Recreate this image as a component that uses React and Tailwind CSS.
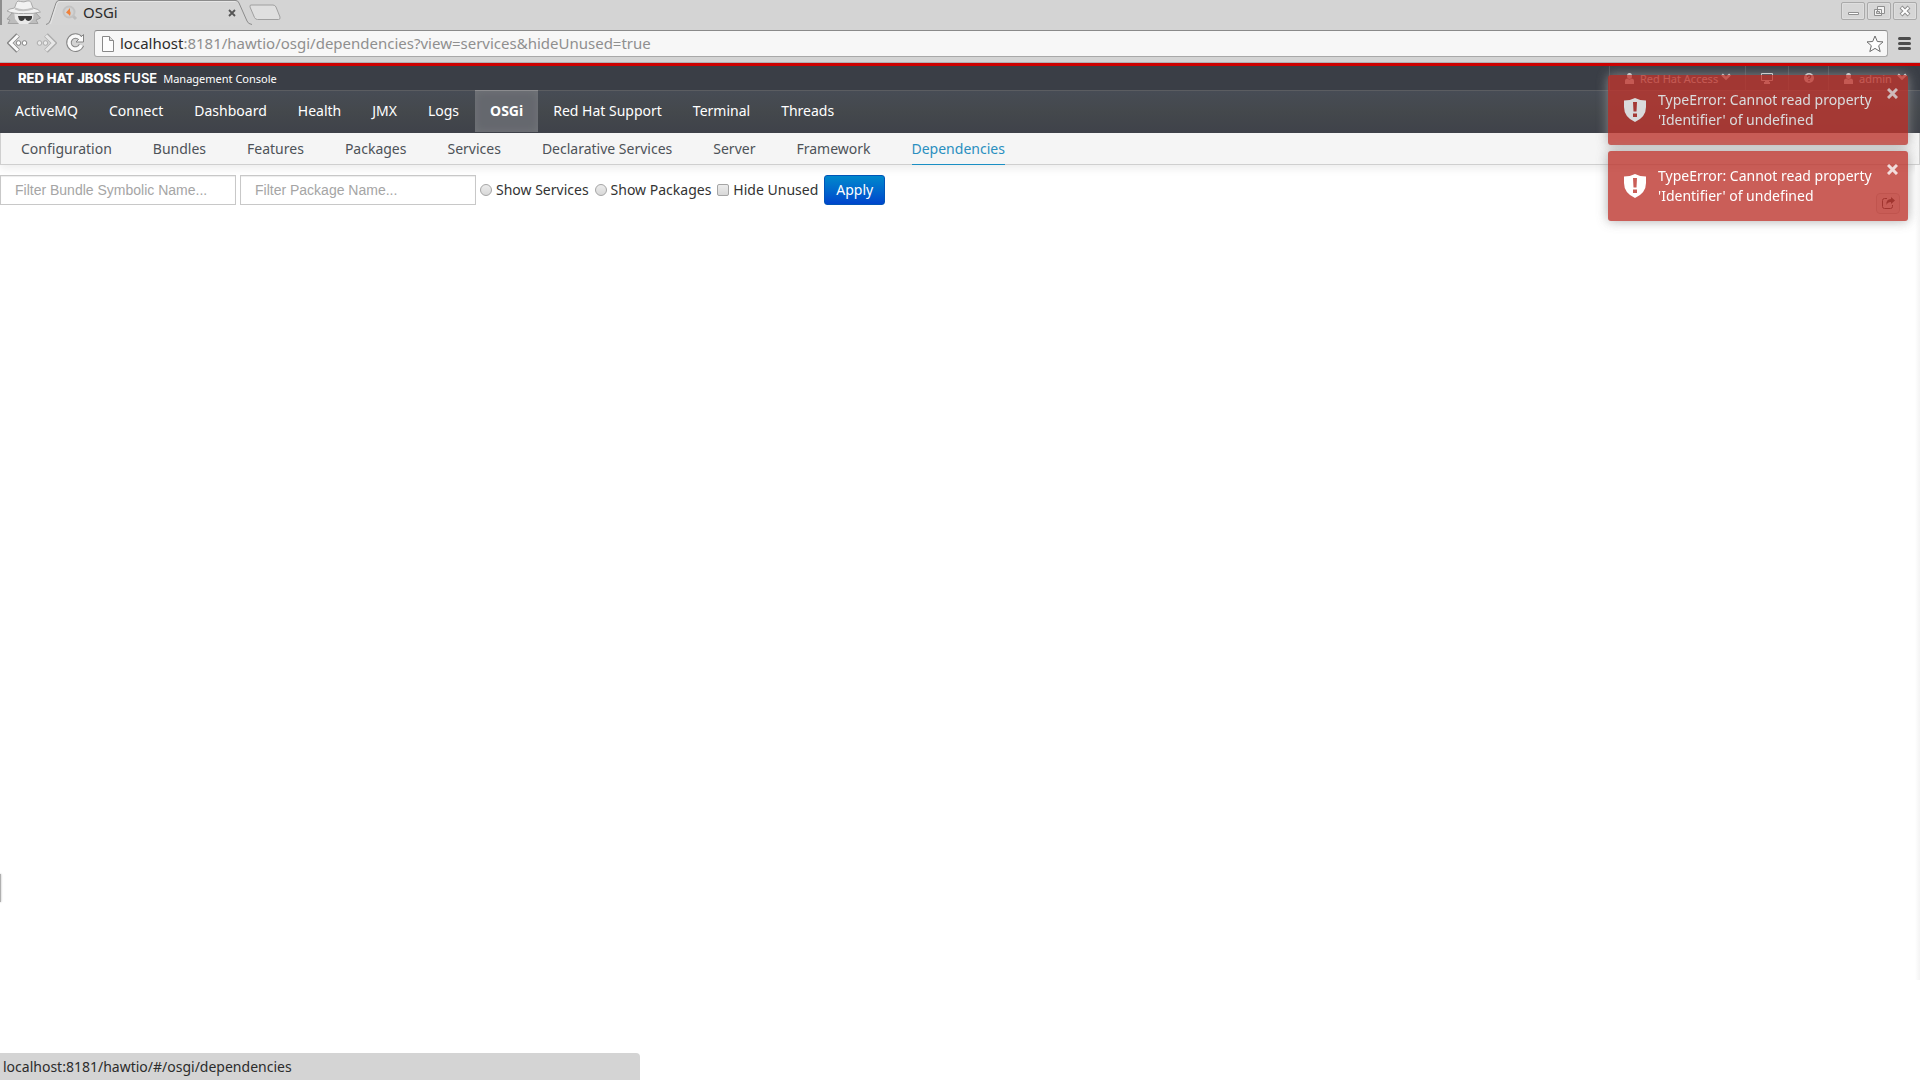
const NAV = ["ActiveMQ", "Connect", "Dashboard", "Health", "JMX", "Logs", "OSGi", "Red Hat Support", "Terminal", "Threads"];
const SUBNAV = ["Configuration", "Bundles", "Features", "Packages", "Services", "Declarative Services", "Server", "Framework", "Dependencies"];

function Incognito() {
  return (
    <svg width="36" height="24" viewBox="0 0 36 24" className="ml-1 block shrink-0">
      <path d="M6 13 L1 19 L4 20 L2 23.500 H32 L30 20 L34.500 18 L30 13 Z" fill="#bdbdbd" stroke="#a2a2a2" />
      <path d="M8 11 L9 19 L13 24 H22 L27 19 L28 11 Z" fill="#e9e9e9" />
      <path d="M1 11 Q3 8.500 8.500 8 L10.500 2.500 Q11.500 0 14.500 1.500 Q18 2.500 21 1 Q24 0 25 2.500 L27 8 Q33 9 34.500 12 Q28 14 17.500 13.500 Q7 14 1 11 Z" fill="#f1f1f1" stroke="#a9a9a9" />
      <path d="M9 8.500 Q17 12 27 8.500" fill="none" stroke="#c2c2c2" strokeWidth="2" />
      <path d="M12 16 H26 V18 Q25 21 22 21 Q20 21 19 18 Q18 21 15.500 21 Q13 21 12.500 18 Z" fill="#3c3c3c" />
    </svg>
  );
}

function BackArrow({ flip, dim }) {
  return (
    <svg width="21" height="20" viewBox="0 0 21 20" className={(flip ? "-scale-x-100 " : "") + (dim ? "opacity-50" : "")}>
      <path d="M11 2 L3 10 L11 18" fill="none" stroke="#858585" strokeWidth="5" />
      <path d="M11 2.500 L3.500 10 L11 17.500" fill="none" stroke="#fafafa" strokeWidth="3" />
      <circle cx="11.500" cy="10" r="2.300" fill="#fff" stroke="#858585" />
      <circle cx="17.500" cy="10" r="2.300" fill="#fff" stroke="#858585" />
    </svg>
  );
}

function Reload() {
  return (
    <svg width="21" height="20" viewBox="0 0 21 20">
      <path d="M15.500 5.500 A6.500 6.500 0 1 0 16.500 12" fill="none" stroke="#858585" strokeWidth="5.500" />
      <path d="M18.500 1.500 V9 H11 Z" fill="#fafafa" stroke="#858585" />
      <path d="M15.500 5.500 A6.500 6.500 0 1 0 16.500 12" fill="none" stroke="#fafafa" strokeWidth="3.500" />
    </svg>
  );
}

function User() {
  return (
    <svg width="9" height="11" viewBox="0 0 9 11" fill="currentColor">
      <ellipse cx="4.500" cy="3" rx="2.500" ry="3" />
      <path d="M0 11 V8 Q0 5.500 2.500 5.500 Q4.500 7.500 6.500 5.500 Q9 5.500 9 8 V11 Z" />
    </svg>
  );
}

function Chevron() {
  return (
    <svg width="10" height="8" viewBox="0 0 10 8" fill="none" stroke="currentColor" strokeWidth="2.500">
      <path d="M1 1.500 L5 5.500 L9 1.500" />
    </svg>
  );
}

function WindowButton({ label, children }) {
  return (
    <button aria-label={label} className="flex h-[18px] w-6 items-center justify-center rounded-[2px] border border-[#aaaaaa] bg-[#d6d6d6] shadow-[inset_0_0_0_1px_#dedede]">
      <svg width="14" height="14" viewBox="0 0 14 14">{children}</svg>
    </button>
  );
}

function Browser() {
  return (
    <header className="bg-[#d4d4d4] font-['Noto_Sans',sans-serif]">
      <div className="flex h-[25px] border-l-2 border-[#8e8e8e]">
        <Incognito />
        <div className="relative ml-2 flex h-6 w-[202px] items-center">
          <svg width="208" height="25" viewBox="0 0 208 25" className="absolute -left-1 top-0">
            <path d="M0 24.500 Q3 24 4 21 L10 3 Q11 0.500 13 0.500 H190 Q192 0.500 193 3 L201 21 Q202 24 206 24.500" fill="#d5d5d5" stroke="#8c8c8c" />
            <path d="M4.500 24 L11 3.500 Q12 1.500 13.500 1.500 H189.500" fill="none" stroke="#e6e6e6" />
          </svg>
          <svg width="16" height="16" viewBox="0 0 16 16" className="relative ml-3 mt-[2px]">
            <path d="M10.500 10.500 L14 14" stroke="#bdbdbd" strokeWidth="3" />
            <circle cx="7" cy="7" r="5.500" fill="#d2d2d2" stroke="#c3c3c3" strokeWidth="2" />
            <path d="M4 7.500 L8 3 V6 Q9.500 8 8 11 Q7 9 4 7.500 Z" fill="#f0813a" />
          </svg>
          <span className="relative ml-[5px] flex-1 text-[15px] leading-6 text-[#2c2c2c]">OSGi</span>
          <button aria-label="Close tab" className="relative mr-4 mt-px">
            <svg width="8" height="8" viewBox="0 0 8 8" stroke="#555" strokeWidth="1.800"><path d="M1 1 L7 7 M7 1 L1 7" /></svg>
          </button>
        </div>
        <button aria-label="New tab" className="-ml-[3px] flex items-center">
          <svg width="32" height="17" viewBox="0 0 32 17"><path d="M2 1 H24 Q26 1 27 3 L31 13 Q31.500 15.500 29.500 15.500 H8.500 Q6.500 15.500 5.500 13.500 L1 3 Q0.500 1 2 1 Z" fill="#dfdfdf" stroke="#a0a0a0" /></svg>
        </button>
        <div className="ml-auto mr-[3px] mt-[2px] flex gap-[2px]">
          <WindowButton label="Minimize"><path d="M2.500 8.500 H12.500 V10.500 H2.500 Z" fill="#fff" stroke="#8f8f8f" /></WindowButton>
          <WindowButton label="Restore"><path d="M5.500 2.500 H12.500 V9.500 H5.500 Z M2.500 5.500 H9.500 V11.500 H2.500 Z" fill="#f2f2f2" stroke="#8f8f8f" /><path d="M4.500 7.500 H7.500 V9.500 H4.500 Z" fill="#d4d4d4" stroke="#8f8f8f" /></WindowButton>
          <WindowButton label="Close window"><path d="M3 3 L11 11 M11 3 L3 11" stroke="#8f8f8f" strokeWidth="4" /><path d="M3.500 3.500 L10.500 10.500 M10.500 3.500 L3.500 10.500" stroke="#fff" strokeWidth="2" /></WindowButton>
        </div>
      </div>
      <div className="flex h-[38px] items-start border-b border-[#aeb0b4] pl-[7px] pt-1">
        <div className="flex h-7 items-center gap-2">
          <button aria-label="Back"><BackArrow /></button>
          <button aria-label="Forward"><BackArrow flip dim /></button>
          <button aria-label="Reload"><Reload /></button>
        </div>
        <div className="ml-2 mt-px flex h-[27px] flex-1 items-center rounded-[3px] border border-[#a8a8a8] border-t-[#8a8a8a] bg-[#f7f7f7] pl-[7px] pr-[3px]">
          <svg width="12" height="16" viewBox="0 0 12 16" fill="#fdfdfd" stroke="#888"><path d="M0.500 0.500 H7.500 L11.500 4.500 V15.500 H0.500 Z" /><path d="M7.500 0.500 V4.500 H11.500" fill="#ddd" /></svg>
          <div className="ml-[6px] flex-1 pb-px text-[15px] leading-6 text-[#8f8f8f]">
            <span className="text-[#2c2c2c]">localhost</span>:8181/hawtio/osgi/dependencies?view=services&amp;hideUnused=true
          </div>
          <button aria-label="Bookmark">
            <svg width="18" height="18" viewBox="0 0 18 18"><path d="M9 1 L11.300 6.500 L17 6.900 L12.700 10.700 L14.200 16.600 L9 13.400 L3.800 16.600 L5.300 10.700 L1 6.900 L6.700 6.500 Z" fill="#fff" stroke="#6c6c6c" strokeLinejoin="round" /></svg>
          </button>
        </div>
        <button aria-label="Menu" className="ml-[10px] mr-[9px] mt-2">
          <svg width="13" height="14" viewBox="0 0 13 14" stroke="#4c4c4c" strokeWidth="3" strokeLinecap="round"><path d="M1.500 1.500 H11.500 M1.500 6.500 H11.500 M1.500 11.500 H11.500" /></svg>
        </button>
      </div>
    </header>
  );
}

function Toast() {
  return (
    <div role="alert" className="relative flex h-[70px] w-[300px] rounded-[3px] bg-[#bd362f] pl-4 pt-[15px] text-white opacity-80 shadow-[0_0_12px_#999]">
      <svg width="22" height="24" viewBox="0 0 22 24" className="mt-2 shrink-0">
        <path d="M11 0 Q16 2.500 22 2.500 V9 Q22 19 11 24 Q0 19 0 9 V2.500 Q6 2.500 11 0 Z" fill="#fff" />
        <path d="M9 4 H13 L12.500 13.500 H9.500 Z M9 15.500 H13 V19 H9 Z" fill="#bd362f" />
      </svg>
      <p className="ml-3 whitespace-nowrap text-sm leading-5">TypeError: Cannot read property<br />'Identifier' of undefined</p>
      <button aria-label="Dismiss" className="absolute right-[10px] top-[13px] opacity-80">
        <svg width="11" height="11" viewBox="0 0 11 11" stroke="#fff" strokeWidth="3"><path d="M1 1 L10 10 M10 1 L1 10" /></svg>
      </button>
    </div>
  );
}

export default function App() {
  return (
    <div className="relative flex min-h-screen flex-col overflow-hidden bg-white font-['Noto_Sans',sans-serif] text-sm text-[#333]">
      <Browser />
      <div className="flex h-[27px] items-stretch border-t-[3px] border-[#cc0000] bg-[#3a3e46] text-white">
        <div className="flex items-center gap-[3px] pl-[18px] font-['Inter',sans-serif] text-[13px] font-extrabold leading-6">
          <span>RED HAT</span><span>JBOSS</span><span className="font-semibold">FUSE</span>
        </div>
        <span className="ml-[6px] text-[11px] leading-[25px]">Management Console</span>
        <div className="ml-auto flex text-[11px] leading-[25px] text-[#e4e5e7]">
          <button className="flex w-[136px] items-center border-l border-[#53565c] pl-[15px]"><User /><span className="ml-[6px]">Red Hat Access</span><span className="mb-[2px] ml-[3px]"><Chevron /></span></button>
          <button aria-label="Display" className="flex w-[43px] items-center justify-center border-l border-[#53565c]">
            <svg width="12" height="11" viewBox="0 0 12 11"><path d="M0.500 0.500 H11.500 V7.500 H0.500 Z" fill="none" stroke="currentColor" /><path d="M4 8 H8 V9 H9 V11 H3 V9 H4 Z" fill="currentColor" /></svg>
          </button>
          <button aria-label="Help" className="flex w-10 items-center justify-center border-l border-[#53565c]">
            <svg width="10" height="10" viewBox="0 0 10 10"><circle cx="5" cy="5" r="5" fill="currentColor" /><path d="M3.300 3.800 Q3.500 2.300 5 2.300 Q6.700 2.300 6.700 3.800 Q6.700 4.600 5 5.300 V6 M5 7 V8.300" fill="none" stroke="#3a3e46" strokeWidth="1.400" /></svg>
          </button>
          <button className="flex w-[92px] items-center border-l border-[#53565c] pl-[15px]"><User /><span className="ml-[6px]">admin</span><span className="mb-[2px] ml-[5px]"><Chevron /></span></button>
        </div>
      </div>
      <nav className="flex h-[43px] border-t border-[#5b5d61] bg-linear-to-b from-[#474c55] via-[#44484c] to-[#3f424a] text-white">
        {NAV.map((name) => (
          <a key={name} href="#" className={name === "OSGi" ? "-mt-px mb-px border-t border-[#8b8b8e] bg-[#65686e] px-[15px] font-bold leading-10 shadow-[inset_0_0_8px_#74767b]" : "pl-[15px] pr-4 leading-10"}>{name}</a>
        ))}
      </nav>
      <nav className="flex h-8 gap-[41px] border-x border-b border-[#cfcfcf] bg-[#f5f5f5] pl-5 text-[#4d5258] shadow-[0_4px_8px_rgba(0,0,0,0.07)]">
        {SUBNAV.map((name) => (
          <a key={name} href="#" className={name === "Dependencies" ? "h-8 border-b border-[#1a8fc4] leading-8 text-[#2a8fc0]" : "leading-8"}>{name}</a>
        ))}
      </nav>
      <main className="relative flex-1">
        <form className="flex items-center gap-1 pt-[10px]">
          <input type="text" aria-label="Filter Bundle Symbolic Name" placeholder="Filter Bundle Symbolic Name..." className="h-[30px] w-[236px] border border-[#c8c8c8] px-[14px] font-['Liberation_Sans',sans-serif] text-sm shadow-[inset_0_1px_1px_rgba(0,0,0,0.075)] placeholder:text-[#a5a5a5]" />
          <input type="text" aria-label="Filter Package Name" placeholder="Filter Package Name..." className="h-[30px] w-[236px] border border-[#c8c8c8] px-[14px] font-['Liberation_Sans',sans-serif] text-sm shadow-[inset_0_1px_1px_rgba(0,0,0,0.075)] placeholder:text-[#a5a5a5]" />
          <div className="flex items-center gap-[6px]">
            <label className="flex items-center gap-1"><input type="radio" name="view" className="size-3 appearance-none rounded-full border border-[#a5a5a5] bg-linear-to-b from-[#ececec] to-[#d8d8d8]" />Show Services</label>
            <label className="flex items-center gap-1"><input type="radio" name="view" className="size-3 appearance-none rounded-full border border-[#a5a5a5] bg-linear-to-b from-[#ececec] to-[#d8d8d8]" />Show Packages</label>
            <label className="flex items-center gap-1"><input type="checkbox" className="size-3 appearance-none rounded-[2px] border border-[#a5a5a5] bg-linear-to-b from-[#ececec] to-[#d8d8d8]" />Hide Unused</label>
            <button type="button" className="h-[30px] rounded-[3px] border border-[#0055b8] bg-linear-to-b from-[#0088cc] to-[#0044cc] px-[11px] text-white">Apply</button>
          </div>
        </form>
        <button aria-label="Open in new window" className="absolute right-5 top-7 flex h-[21px] w-6 items-center justify-center rounded-[4px] border border-[#ccc] bg-[#f5f5f5] pb-px text-[#333]">
          <svg width="13" height="12" viewBox="0 0 13 12" fill="none" stroke="currentColor"><path d="M5 1.500 H2.500 Q0.500 1.500 0.500 3.500 V9.500 Q0.500 11.500 2.500 11.500 H8.500 Q10.500 11.500 10.500 9.500 V8" /><path d="M9 0 L13 3.500 L9 7 V5 Q5.500 5 4.500 8 Q3.500 2.500 9 2 Z" fill="currentColor" stroke="none" /></svg>
        </button>
        <div className="absolute bottom-[100px] right-0 top-0 w-[5px] bg-linear-to-l from-[#f4f4f4] to-white" />
        <div className="absolute bottom-[178px] left-0 h-7 w-px bg-[#b0b0b0] shadow-[0_0_2px_#999]" />
      </main>
      <div className="fixed right-3 top-[75px] flex flex-col gap-[6px]">
        <Toast />
        <Toast />
      </div>
      <div className="fixed bottom-0 left-0 h-[27px] w-1/3 rounded-tr-[4px] bg-[#d4d4d4] pl-[3px] text-sm leading-7 text-[#2c2c2c]">localhost:8181/hawtio/#/osgi/dependencies</div>
    </div>
  );
}
